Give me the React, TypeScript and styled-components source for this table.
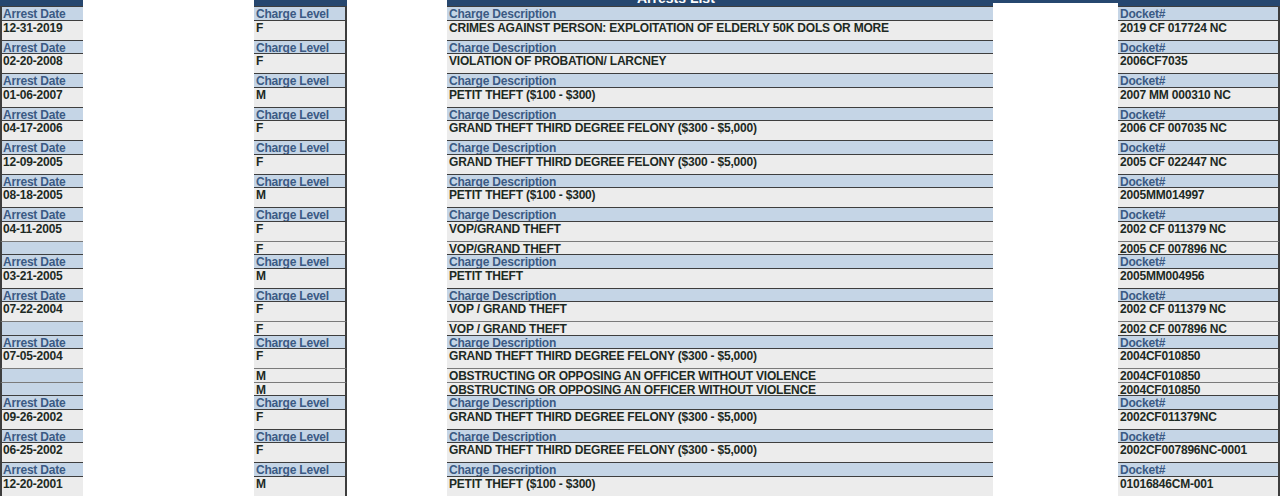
import React from "react";
import styled, { createGlobalStyle } from "styled-components";

const GlobalStyle = createGlobalStyle`
	html, body {
		margin: 0;
		padding: 0;
		background: #ffffff;
	}
	body {
		font-family: "Liberation Sans", Arial, sans-serif;
	}
`;

const COLS = "83px 171px 93px 100px 546px 125px 162px";

type Kind = "head" | "data" | "cont";

const Sheet = styled.div`
	width: 1280px;
	height: 496px;
	overflow: hidden;
	display: flex;
	flex-direction: column;
`;

const TitleBar = styled.div`
	display: grid;
	grid-template-columns: ${COLS};
	height: 6px;
	overflow: hidden;
`;

const TitleCell = styled.div<{ $cover?: "full" | "part" }>`
	background: ${({ $cover }) => ($cover ? "#ffffff" : "#26476f")};
	border-top: ${({ $cover }) => ($cover === "part" ? "3px solid #26476f" : "none")};
`;

const TitleText = styled.div`
	margin-top: -10px;
	padding-left: 190px;
	font-size: 14px;
	line-height: 16px;
	font-weight: bold;
	color: #ffffff;
	white-space: nowrap;
`;

const Row = styled.div<{ $kind: Kind }>`
	display: grid;
	grid-template-columns: ${COLS};
	height: ${({ $kind }) => ($kind === "data" ? "20px" : "13.5px")};
`;

const Cell = styled.div<{ $kind: Kind; $blank?: boolean; $edge?: "left" | "right" }>`
	box-sizing: border-box;
	padding: 1px 2px 0;
	font-size: 12px;
	line-height: 12px;
	font-weight: bold;
	letter-spacing: -0.2px;
	white-space: nowrap;
	overflow: hidden;
	border-top: 1px solid ${({ $kind }) => ($kind === "cont" ? "#7a7a7a" : "#3e3e3e")};
	background: ${({ $kind, $blank }) => ($kind === "head" || $blank ? "#c5d5e6" : "#ececec")};
	color: ${({ $kind }) => ($kind === "head" ? "#3b5a84" : "#1d2a24")};
	${({ $edge }) => ($edge === "left" ? "border-left: 2px solid #3e3e3e; padding-left: 1px;" : "")}
	${({ $edge }) => ($edge === "right" ? "border-right: 2px solid #3e3e3e;" : "")}
`;

const Redacted = styled.div`
	background: #ffffff;
`;

type Charge = [string, string, string];
type Arrest = { date: string; charges: Charge[] };

const GT = "GRAND THEFT THIRD DEGREE FELONY ($300 - $5,000)";
const PT = "PETIT THEFT ($100 - $300)";
const OB = "OBSTRUCTING OR OPPOSING AN OFFICER WITHOUT VIOLENCE";

const arrests: Arrest[] = [
	{ date: "12-31-2019", charges: [["F", "CRIMES AGAINST PERSON: EXPLOITATION OF ELDERLY 50K DOLS OR MORE", "2019 CF 017724 NC"]] },
	{ date: "02-20-2008", charges: [["F", "VIOLATION OF PROBATION/ LARCNEY", "2006CF7035"]] },
	{ date: "01-06-2007", charges: [["M", PT, "2007 MM 000310 NC"]] },
	{ date: "04-17-2006", charges: [["F", GT, "2006 CF 007035 NC"]] },
	{ date: "12-09-2005", charges: [["F", GT, "2005 CF 022447 NC"]] },
	{ date: "08-18-2005", charges: [["M", PT, "2005MM014997"]] },
	{
		date: "04-11-2005",
		charges: [
			["F", "VOP/GRAND THEFT", "2002 CF 011379 NC"],
			["F", "VOP/GRAND THEFT", "2005 CF 007896 NC"],
		],
	},
	{ date: "03-21-2005", charges: [["M", "PETIT THEFT", "2005MM004956"]] },
	{
		date: "07-22-2004",
		charges: [
			["F", "VOP / GRAND THEFT", "2002 CF 011379 NC"],
			["F", "VOP / GRAND THEFT", "2002 CF 007896 NC"],
		],
	},
	{
		date: "07-05-2004",
		charges: [
			["F", GT, "2004CF010850"],
			["M", OB, "2004CF010850"],
			["M", OB, "2004CF010850"],
		],
	},
	{ date: "09-26-2002", charges: [["F", GT, "2002CF011379NC"]] },
	{ date: "06-25-2002", charges: [["F", GT, "2002CF007896NC-0001"]] },
	{ date: "12-20-2001", charges: [["M", PT, "01016846CM-001"]] },
];

const Line: React.FC<{ kind: Kind; cells: string[] }> = ({ kind, cells }) => (
	<Row $kind={kind}>
		<Cell $kind={kind} $edge="left" $blank={kind === "cont"}>
			{cells[0]}
		</Cell>
		<Redacted />
		<Cell $kind={kind} $edge="right">
			{cells[1]}
		</Cell>
		<Redacted />
		<Cell $kind={kind}>{cells[2]}</Cell>
		<Redacted />
		<Cell $kind={kind} $edge="right">
			{cells[3]}
		</Cell>
	</Row>
);

const App: React.FC = () => {
	return (
		<>
			<GlobalStyle />
			<Sheet>
				<TitleBar>
					<TitleCell />
					<TitleCell $cover="full" />
					<TitleCell />
					<TitleCell $cover="full" />
					<TitleCell>
						<TitleText>Arrests List</TitleText>
					</TitleCell>
					<TitleCell $cover="part" />
					<TitleCell />
				</TitleBar>
				{arrests.map((a) => (
					<React.Fragment key={a.date}>
						<Line kind="head" cells={["Arrest Date", "Charge Level", "Charge Description", "Docket#"]} />
						{a.charges.map((c, i) => (
							<Line key={i} kind={i === 0 ? "data" : "cont"} cells={[i === 0 ? a.date : "", ...c]} />
						))}
					</React.Fragment>
				))}
			</Sheet>
		</>
	);
};

export default App;
